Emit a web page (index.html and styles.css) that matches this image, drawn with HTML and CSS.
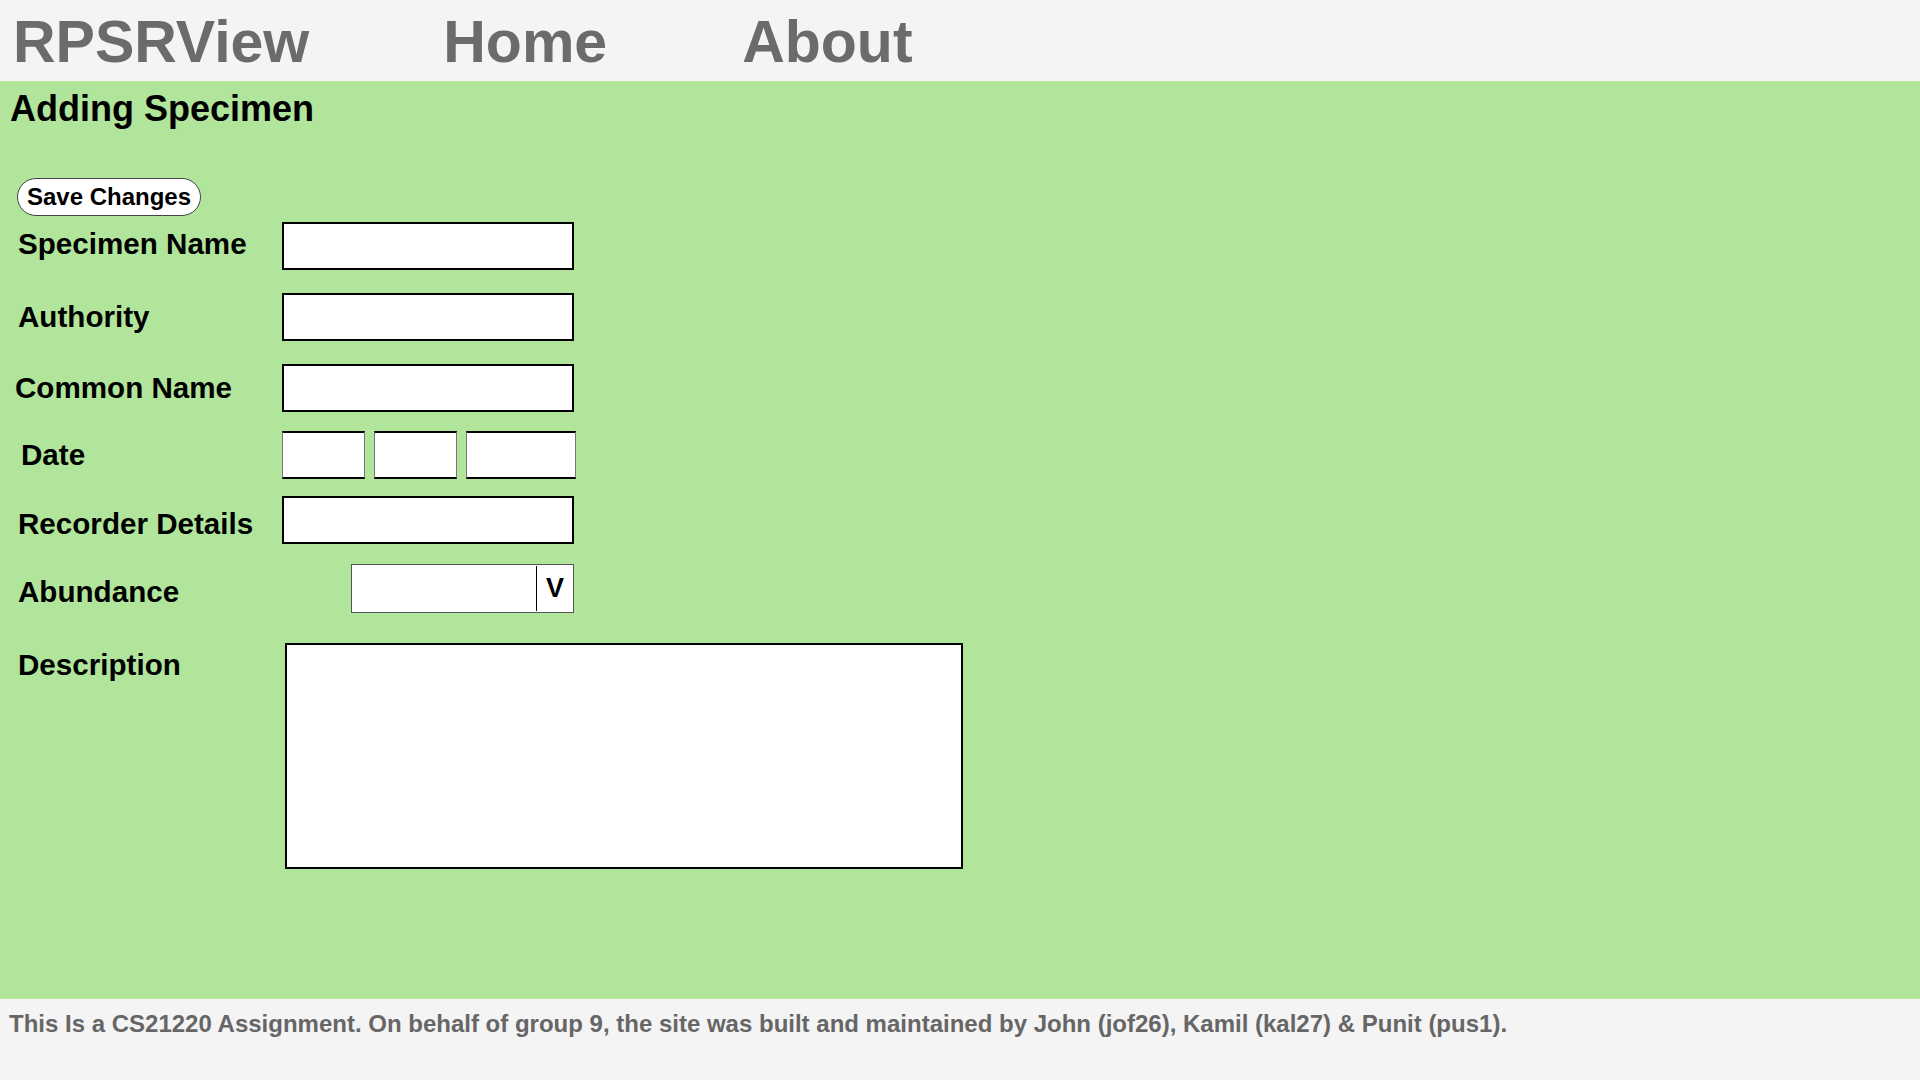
FILE: index.html
```html
<!DOCTYPE html>
<html lang="en">
<head>
<meta charset="utf-8">
<title>RPSRView - Adding Specimen</title>
<link rel="stylesheet" href="styles.css">
</head>
<body>
<header class="topbar">
  <a class="brand" href="#">RPSRView</a>
  <a class="nav-link nav-home" href="#">Home</a>
  <a class="nav-link nav-about" href="#">About</a>
</header>
<main class="content">
  <h1 class="page-title">Adding Specimen</h1>
  <form class="specimen-form">
    <button type="button" class="save-btn">Save Changes</button>
    <div class="row row-first">
      <label class="lbl lbl-high">Specimen Name</label>
      <input class="field" type="text">
    </div>
    <div class="row">
      <label class="lbl">Authority</label>
      <input class="field" type="text">
    </div>
    <div class="row">
      <label class="lbl lbl-common">Common Name</label>
      <input class="field" type="text">
    </div>
    <div class="row row-date">
      <label class="lbl lbl-date">Date</label>
      <div class="date-group">
        <input class="date-box" type="text">
        <input class="date-box" type="text">
        <input class="date-box date-year" type="text">
      </div>
    </div>
    <div class="row row-recorder">
      <label class="lbl lbl-low">Recorder Details</label>
      <input class="field" type="text">
    </div>
    <div class="row row-abundance">
      <label class="lbl lbl-low">Abundance</label>
      <div class="select">
        <span class="select-value"></span>
        <span class="select-arrow">V</span>
      </div>
    </div>
    <div class="row row-desc">
      <label class="lbl lbl-desc">Description</label>
      <textarea class="desc"></textarea>
    </div>
  </form>
</main>
<footer class="footer">This Is a CS21220 Assignment. On behalf of group 9, the site was built and maintained by John (jof26), Kamil (kal27) &amp; Punit (pus1).</footer>
</body>
</html>
```

FILE: styles.css
```css
* { box-sizing: border-box; }
html, body { margin: 0; padding: 0; }
body {
  font-family: "Liberation Sans", Arial, sans-serif;
  font-weight: bold;
  width: 1920px;
  height: 1080px;
  display: flex;
  flex-direction: column;
  overflow: hidden;
}
.topbar {
  height: 81px;
  flex: none;
  background: #f4f4f4;
  display: flex;
  align-items: flex-start;
  padding: 8px 0 0 13px;
}
.topbar a {
  font-size: 59px;
  line-height: normal;
  color: #6b6b6b;
  text-decoration: none;
  font-weight: bold;
}
.nav-home { margin-left: 134px; }
.nav-about { margin-left: 135px; }

.content {
  flex: 1;
  background: #b0e59b;
  padding: 0 0 0 10px;
}
.page-title {
  margin: 7px 0 0 0;
  font-size: 36px;
  line-height: normal;
  color: #000;
}
.specimen-form {
  display: flex;
  flex-direction: column;
  align-items: flex-start;
  padding-top: 48px;
}
.save-btn {
  margin-left: 7px;
  width: 184px;
  height: 38px;
  border: 1px solid #444;
  border-radius: 19px;
  background: #fff;
  font-family: "Liberation Sans", Arial, sans-serif;
  font-weight: bold;
  font-size: 24px;
  color: #000;
  padding: 0;
  line-height: 1;
}
.row {
  display: flex;
  align-items: center;
  margin-top: 23px;
  width: 960px;
}
.row-first { margin-top: 6px; }
.row-date { margin-top: 19px; }
.row-recorder { margin-top: 17px; }
.row-abundance { margin-top: 20px; }
.row-desc { margin-top: 30px; align-items: flex-start; }
.lbl {
  width: 272px;
  flex: none;
  padding-left: 8px;
  font-size: 29.6px;
  color: #000;
}
.lbl-high { padding-bottom: 4px; }
.lbl-common { padding-left: 5px; }
.lbl-date { padding-left: 11px; }
.lbl-low { padding-top: 7px; }
.lbl-desc { padding-left: 8px; padding-top: 5px; }
.field {
  width: 292px;
  height: 48px;
  border: 2px solid #000;
  background: #fff;
  margin: 0;
  padding: 0 6px;
  font-size: 20px;
}
.date-group {
  display: flex;
  gap: 9px;
}
.date-box {
  width: 83px;
  height: 48px;
  border-top: 2px solid #000;
  border-bottom: 2px solid #000;
  border-left: 1px solid #777;
  border-right: 1px solid #777;
  background: #fff;
  margin: 0;
  padding: 0 4px;
}
.date-year { width: 110px; }
.select {
  margin-left: 69px;
  width: 223px;
  height: 49px;
  border: 1px solid #555;
  background: #fff;
  display: flex;
}
.select-value { flex: 1; }
.select-arrow {
  width: 37px;
  border-left: 1.5px solid #000;
  margin: 1px 0;
  display: flex;
  align-items: center;
  justify-content: center;
  font-size: 27px;
  color: #000;
}
.desc {
  margin: 0 0 0 3px;
  width: 678px;
  height: 226px;
  border: 2px solid #000;
  background: #fff;
  resize: none;
  padding: 4px;
}
.footer {
  height: 81px;
  flex: none;
  background: #f4f4f4;
  color: #666;
  font-size: 24px;
  line-height: normal;
  padding: 11px 0 0 9px;
}
```
